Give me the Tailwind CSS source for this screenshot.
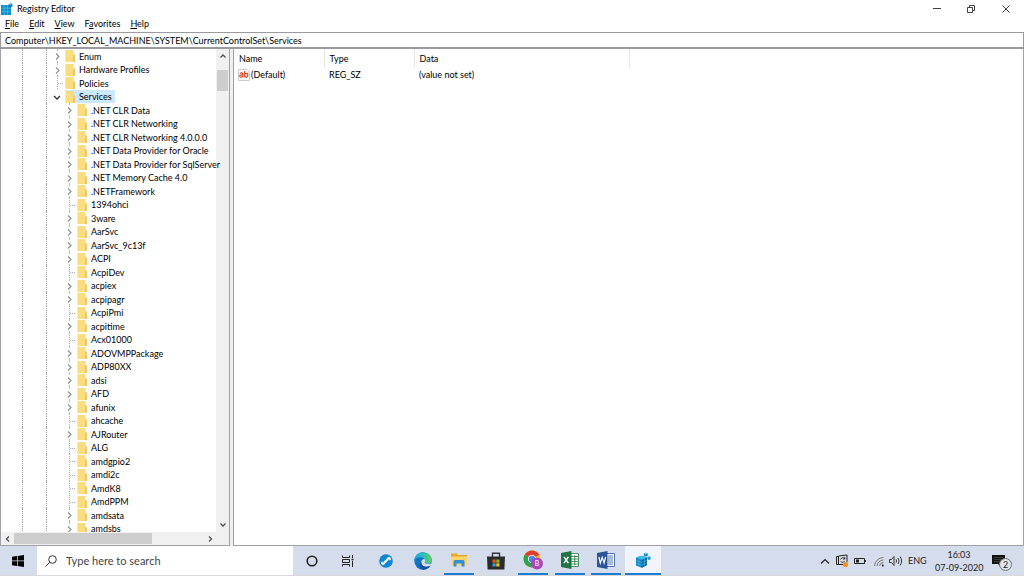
<!DOCTYPE html>
<html lang="en">
<head>
    <meta charset="UTF-8">
    <meta name="viewport" content="width=device-width, initial-scale=1.0">
    <title>Registry Editor</title>
    <script src="https://cdn.jsdelivr.net/npm/@tailwindcss/browser@4"></script>
</head>
<body class="h-screen flex flex-col overflow-hidden bg-white text-black font-['Lato','Noto_Sans',sans-serif] text-[9px] leading-[13px]">

    <!-- shared icons -->
    <svg class="hidden">
        <symbol id="folder" viewBox="0 0 10 12">
            <path d="M0 0h8.600v4l1.200 1v7H0z" fill="#fbdc7e"/>
            <path d="M0 0h1v12H0z" fill="#fee9a8"/>
            <path d="M8.400 4.600h1.500V12H8z" fill="#edc45a"/>
        </symbol>
        <symbol id="regedit" viewBox="0 0 16 16">
            <path d="M1 5.500l5.500-1.700L12 5.500v7.600l-5.200 2.700L1 13.400z" fill="#1284c4"/>
            <path d="M6.800 7.800L12 5.500v7.600l-5.200 2.700z" fill="#0a659f"/>
            <path d="M1 5.500l5.500-1.700L12 5.500 6.800 7.800z" fill="#41b9ec"/>
            <path d="M1 8.100l5.800 2.300L12 8M1 10.700l5.800 2.400 5.200-2.500M3.900 6.700v7.700M9.400 6.700v7.700" stroke="#5ec4ea" stroke-width=".5" fill="none"/>
            <path d="M8.800 1.600l2-.9 2 .9v2.200l-2 1-2-1zM12.400 4.900l1.600-.7 1.600.7v2.300l-1.600.8-1.600-.8z" fill="#1a8fcb"/>
            <path d="M8.800 1.600l2-.9 2 .9-2 .9zM12.400 4.900l1.600-.7 1.600.7-1.600.7z" fill="#63cdf3"/>
        </symbol>
    </svg>

    <!-- title bar -->
    <header class="flex items-center h-[17px] shrink-0 pl-px">
        <svg class="w-3 h-3" viewBox="0 0 12 12">
            <path d="M0 2h8v2h2v8H0z" fill="#118bcb"/>
            <path d="M0 5.200h10M0 8.600h10M3.300 2v10M6.600 2v10" stroke="#5cc8ef" stroke-width=".6"/>
            <path d="M7.500 1.500l2-1.200 2 .8v2.400l-2 1.200-2-.8z" fill="#1583bd"/>
            <path d="M7.500 1.500l2-1.200 2 .8-2 1z" fill="#56c4ee"/>
        </svg>
        <h1 class="ml-1 flex-1">Registry Editor</h1>
        <div class="flex text-neutral-700">
            <button class="w-[34px] h-4 grid place-items-center" aria-label="Minimize">
                <svg class="w-2 h-2" viewBox="0 0 8 8" stroke="currentColor"><path d="M0 3.500h8"/></svg>
            </button>
            <button class="w-[34px] h-4 grid place-items-center" aria-label="Restore">
                <svg class="w-2 h-2" viewBox="0 0 8 8" stroke="currentColor" fill="none"><path d="M.5 2.500h5v5h-5zM2.500 2V.5h5v5H6"/></svg>
            </button>
            <button class="w-[36px] h-4 grid place-items-center" aria-label="Close">
                <svg class="w-2 h-2" viewBox="0 0 8 8" stroke="currentColor"><path d="M.5.5l7 7M7.500.5l-7 7"/></svg>
            </button>
        </div>
    </header>

    <!-- menu -->
    <nav class="flex items-start h-[15px] shrink-0 gap-[10px] pl-[5px]">
        <button><u>F</u>ile</button>
        <button><u>E</u>dit</button>
        <button><u>V</u>iew</button>
        <button>F<u>a</u>vorites</button>
        <button><u>H</u>elp</button>
    </nav>

    <input type="text" aria-label="Address" value="Computer\HKEY_LOCAL_MACHINE\SYSTEM\CurrentControlSet\Services"
        class="h-[17px] w-full shrink-0 border border-b-2 border-[#9a9a9f] px-1 outline-none">

    <main class="flex-1 min-h-0 flex bg-[#f0f0f0]">
        <!-- key tree -->
        <section class="w-[230px] shrink-0 flex flex-col bg-white border-x border-b border-[#a0a0a8]">
            <div class="flex-1 min-h-0 flex">
                <ul id="tree" class="flex-1 min-w-0 z-10 overflow-y-clip"></ul>
                <div class="w-[13px] shrink-0 flex flex-col items-center bg-[#f0f0f0] text-neutral-600">
                    <button class="w-full h-[21px] flex justify-center pt-1" aria-label="Scroll up">
                        <svg class="w-1.5 h-1.5" viewBox="0 0 6 6" fill="none" stroke="currentColor" stroke-width="1.300"><path d="M.5 4.500L3 2 5.500 4.500"/></svg>
                    </button>
                    <div class="w-[11px] h-[21px] bg-[#cdcdcd]"></div>
                    <button class="mt-auto w-full h-3 flex justify-center pt-0.5" aria-label="Scroll down">
                        <svg class="w-1.5 h-1.5" viewBox="0 0 6 6" fill="none" stroke="currentColor" stroke-width="1.300"><path d="M.5 1.500L3 4 5.500 1.500"/></svg>
                    </button>
                </div>
            </div>
            <div class="h-[13px] shrink-0 flex bg-[#f0f0f0] pr-[13px] text-neutral-600">
                <button class="w-[13px] grid place-items-center" aria-label="Scroll left">
                    <svg class="w-1.5 h-1.5" viewBox="0 0 6 6" fill="none" stroke="currentColor" stroke-width="1.300"><path d="M4 .5L1.500 3 4 5.500"/></svg>
                </button>
                <div class="w-[138px] my-px bg-[#cdcdcd]"></div>
                <button class="ml-auto w-[13px] grid place-items-center" aria-label="Scroll right">
                    <svg class="w-1.5 h-1.5" viewBox="0 0 6 6" fill="none" stroke="currentColor" stroke-width="1.300"><path d="M2 .5L4.500 3 2 5.500"/></svg>
                </button>
            </div>
        </section>

        <!-- values -->
        <section class="ml-[3px] flex-1 bg-white border-x border-b border-[#a0a0a8]">
            <table class="table-fixed w-[396px] text-left">
                <thead>
                    <tr class="h-[19px]">
                        <th class="w-[90px] pl-[5px] font-normal border-r border-neutral-200">Name</th>
                        <th class="w-[90px] pl-[5px] font-normal border-r border-neutral-200">Type</th>
                        <th class="pl-[5px] font-normal border-r border-neutral-200">Data</th>
                    </tr>
                </thead>
                <tbody>
                    <tr class="h-[13px]">
                        <td class="pl-1">
                            <div class="flex items-center gap-px">
                                <svg class="w-3 h-3" viewBox="0 0 12 12">
                                    <path d="M.5.5h8.500l2.500 2.500v8.500H.5z" fill="#fafafa" stroke="#bdbdbd" stroke-width=".8"/>
                                    <g fill="none" stroke="#d9401f" stroke-width="1.200"><path d="M1.800 4.300c2.500-.9 3 0 3 1v3M4.800 6c-3-.2-3.300.5-3 1.500.6.9 2 .8 3-.2"/><path d="M6.700 2v6.300M6.700 5c1.500-1.400 3.200-.6 3.200 1.100 0 2-1.700 2.600-3.200 1.400"/></g>
                                </svg>
                                (Default)
                            </div>
                        </td>
                        <td class="pl-[5px]">REG_SZ</td>
                        <td class="pl-[5px]">(value not set)</td>
                    </tr>
                </tbody>
            </table>
        </section>
    </main>

    <!-- taskbar -->
    <footer class="h-[30px] shrink-0 flex bg-[#d5dcec] border-b border-[#d9d9dc]">
        <button class="w-[37px] grid place-items-center pr-px" aria-label="Start">
            <svg class="w-3 h-3" viewBox="0 0 12 12"><path d="M0 1.700L5 1v4.600H0zM5.700.9L12 0v5.600H5.700zM0 6.300h5V11l-5-.7zM5.700 6.300H12V12l-6.300-.9z"/></svg>
        </button>
        <label class="w-64 flex items-center bg-white pl-2">
            <svg class="w-3 h-3" viewBox="0 0 12 12" fill="none" stroke="#333"><circle cx="7.500" cy="4.500" r="3.800"/><path d="M4.800 7.200L.5 11.500"/></svg>
            <input type="text" placeholder="Type here to search" aria-label="Search"
                class="ml-[9px] w-[200px] text-[11px] outline-none placeholder:text-[#444]">
        </label>
        <button class="w-[37px] grid place-items-center" aria-label="Cortana">
            <svg class="w-3 h-3" viewBox="0 0 12 12"><circle cx="6" cy="6" r="4.800" fill="none" stroke="#222" stroke-width="1.600"/></svg>
        </button>
        <button class="w-[37px] grid place-items-center pr-px" aria-label="Task View">
            <svg class="w-[14px] h-3" viewBox="0 0 14 12" fill="none" stroke="#222"><path d="M1.500.5v2h7v-2M1.500 11.500v-2h7v2M1.500 4.500h7v3h-7zM11.500 0v3M11.500 6v6"/><path d="M10.500 4.500h2" stroke-width="1.600"/></svg>
        </button>
        <button class="w-[37px] grid place-items-center" aria-label="Support">
            <svg class="w-[14px] h-[14px]" viewBox="0 0 14 14"><circle cx="7" cy="7" r="6.800" fill="#0f86cf"/><path d="M5 9l4-4" stroke="#fff" stroke-width="2.200"/><path d="M5.900 8.100a2 2 0 1 1-2.900-.8l.9 1.500zM8.100 5.900a2 2 0 1 1 2.900.8l-.9-1.500z" fill="#fff"/></svg>
        </button>
        <button class="w-[37px] grid place-items-center" aria-label="Edge">
            <svg class="w-[18px] h-[18px]" viewBox="0 0 18 18">
                <defs>
                    <linearGradient id="wave" x1="0" x2="1"><stop offset="0" stop-color="#1ea5e0"/><stop offset=".6" stop-color="#35c1b8"/><stop offset="1" stop-color="#62cf4a"/></linearGradient>
                </defs>
                <circle cx="9" cy="9" r="8.700" fill="#1173c6"/>
                <path d="M.3 8.600C.8 3.600 4.500.3 9 .3c5.300 0 8.700 3.700 8.700 7.400 0 2.600-2 4-4.300 4-1.800 0-2.900-.6-2.900-1.100 0-.5.7-.7.7-1.900C11.200 7 9.500 5.200 6.600 5.200 3.400 5.200 1 7 .3 8.600z" fill="url(#wave)"/>
                <path d="M10.500 10.600c-.5 0 .7-.7.7-1.900 0-.7-.4-1.400-.9-1.900-2 .2-3 1.700-3 3.600 0 2.600 2.300 4.300 5.500 4.300 1.500 0 2.900-.5 3.700-1.100l.8-2.100c-1.500.6-6.300.6-6.800-.9z" fill="#d5dcec"/>
                <path d="M7.300 10.400c0 2.800 2.500 4.600 5.500 4.300 1.500 0 2.900-.5 3.700-1.100C15 16 12.400 17.700 9.500 17.700 5.500 17 4.500 12 7.300 10.400z" fill="#0f4f9e"/>
            </svg>
        </button>
        <button class="w-[37px] grid place-items-center pl-[3px] pr-1" aria-label="File Explorer">
            <span class="w-full h-full grid place-items-center border-b-2 border-[#1c7cd0]">
                <svg class="w-4 h-4" viewBox="0 0 16 16"><path d="M0 1.500h6l1 1.500h9v3H0z" fill="#e7a82b"/><path d="M0 4.500h16v9H0z" fill="#fcd668"/><path d="M2.500 14.500V9.500q0-1.500 1.500-1.500h8q1.500 0 1.500 1.500v5h-3v-3h-5v3z" fill="#348fd8"/></svg>
            </span>
        </button>
        <button class="w-[37px] grid place-items-center pr-px" aria-label="Microsoft Store">
            <svg class="w-[18px] h-[18px]" viewBox="0 0 18 18"><path d="M5.500 5V1.200h7V5" fill="none" stroke="#333" stroke-width="1.400"/><path d="M0 4.500h18l-.6 13H.6z" fill="#2b2b2d"/><path d="M5.500 7.500h3.200v3.200H5.500z" fill="#f0512b"/><path d="M9.300 7.500h3.200v3.200H9.300z" fill="#7fba22"/><path d="M5.500 11.300h3.200v3.200H5.500z" fill="#22a4ec"/><path d="M9.300 11.300h3.200v3.200H9.300z" fill="#fdb913"/></svg>
        </button>
        <button class="w-[37px] grid place-items-center pl-[3px] pr-1" aria-label="Chrome">
            <span class="w-full h-full grid place-items-center border-b-2 border-[#1c7cd0]">
                <svg class="w-5 h-5" viewBox="0 0 20 20">
                    <circle cx="9" cy="9" r="8.500" fill="#fbc116"/>
                    <path d="M9 9L1.640 4.750A8.500 8.500 0 0 1 16.360 4.750z" fill="#e23c2e"/>
                    <path d="M9 9L1.640 4.750A8.500 8.500 0 0 0 9 17.500L12 11z" fill="#2ba24c"/>
                    <path d="M9 5h7.500v-.5H9z" fill="#e23c2e"/>
                    <circle cx="9" cy="9" r="4" fill="#fff"/><circle cx="9" cy="9" r="3.200" fill="#4587f3"/>
                    <circle cx="14" cy="13.500" r="6" fill="#ab47bc"/>
                    <text x="14" y="16" text-anchor="middle" font-size="7" fill="#fff">B</text>
                </svg>
            </span>
        </button>
        <button class="w-9 grid place-items-center px-[3px]" aria-label="Excel">
            <span class="w-full h-full grid place-items-center border-b-2 border-[#1c7cd0]">
                <svg class="w-[18px] h-[18px]" viewBox="0 0 18 18"><path d="M9.500 2.500h8v13h-8z" fill="#fff" stroke="#1f7345" stroke-width=".8"/><path d="M10 5.500h7M10 8h7M10 10.500h7M10 13h7M13.800 4v10.500" stroke="#1f7345" stroke-width=".8"/><path d="M0 2L10.500 0v18L0 16z" fill="#1f7345"/><path d="M3 5.800l4.400 6.400M7.400 5.800L3 12.200" stroke="#fff" stroke-width="1.500"/></svg>
            </span>
        </button>
        <button class="w-[37px] grid place-items-center pl-[3px] pr-1" aria-label="Word">
            <span class="w-full h-full grid place-items-center border-b-2 border-[#1c7cd0]">
                <svg class="w-[18px] h-[18px]" viewBox="0 0 18 18"><path d="M9.500 2.500h8v13h-8z" fill="#fff" stroke="#2a5699" stroke-width=".8"/><path d="M11 5h5M11 7h5M11 9h5M11 11h5M11 13h5" stroke="#2a5699" stroke-width=".8"/><path d="M0 2L10.500 0v18L0 16z" fill="#2a5699"/><path d="M1.900 6l1.400 6 1.900-5.600L7.100 12l1.500-6" stroke="#fff" stroke-width="1.200" fill="none"/></svg>
            </span>
        </button>
        <button class="w-9 grid place-items-center bg-[#f1f4fa] border-b-2 border-[#1c7cd0]" aria-label="Registry Editor">
            <svg class="w-4 h-4"><use href="#regedit"/></svg>
        </button>

        <!-- tray -->
        <div class="ml-auto flex items-center gap-[5px] text-[#222]">
            <button aria-label="Hidden icons"><svg class="w-[10px] h-3" viewBox="0 0 10 12" fill="none" stroke="currentColor" stroke-width="1.200"><path d="M1 8.500l4-4 4 4"/></svg></button>
            <svg class="w-[14px] h-[14px]" viewBox="0 0 14 14" fill="none" stroke="currentColor"><path d="M3.500 2.500h-2v8H8M3.500 2v8.500M3.500 2l8.500-1v7"/><path d="M5.500 5.500A2.400 2.400 0 0 1 9.500 4.500M9.800 3v2H8M9.500 7.200a2.400 2.400 0 0 1-3.800.3" stroke-width=".9"/><circle cx="10.500" cy="10.500" r="2.600" fill="#f7901e" stroke="none"/></svg>
            <svg class="w-3 h-3" viewBox="0 0 12 12"><path d="M.5 3.500h10v5H.5z" fill="none" stroke="currentColor"/><path d="M2 4.500h3v3H2zM11 5h1v2h-1z" fill="currentColor"/></svg>
            <svg class="ml-[3px] w-[10px] h-3" viewBox="0 0 10 12" fill="none" stroke="#777"><path d="M.5 11A9 9 0 0 1 9.500 2.500M3 11a6.500 6.500 0 0 1 6.500-6M5.500 11a4 4 0 0 1 4-3.500"/><circle cx="8.800" cy="10.500" r="1" fill="#222" stroke="none"/></svg>
            <svg class="w-[14px] h-3" viewBox="0 0 14 12" fill="none" stroke="currentColor" stroke-width=".9"><path d="M.5 4.500h2l2.500-3v9l-2.500-3h-2zM7 4.300q1.200 1.700 0 3.400M9 3q2.200 3 0 6M11 1.500q3.300 4.500 0 9"/></svg>
            <span class="w-[18px]">ENG</span>
            <time class="ml-1 w-12 text-center whitespace-nowrap">16:03<br>07-09-2020</time>
            <button class="ml-1 mr-[14px] relative w-[18px] h-[18px]" aria-label="Notifications">
                <svg class="w-[14px] h-[14px]" viewBox="0 0 14 14"><path d="M0 1h13v9H9v3l-3-3H0z" fill="#111"/><path d="M2 3.500h9M2 5.500h9M2 7.500h9" stroke="#666" stroke-width=".5"/></svg>
                <span class="absolute left-[7px] top-[6px] w-[13px] h-[13px] rounded-full border border-neutral-500 bg-[#dfe3ec] leading-[11px] text-center">2</span>
            </button>
        </div>
    </footer>

    <script>
        // + closed key with children, v open key, - key without children
        const parents = ['+Enum', '+Hardware Profiles', '-Policies', 'vServices'];
        const services = [
            '+.NET CLR Data', '+.NET CLR Networking', '+.NET CLR Networking 4.0.0.0',
            '+.NET Data Provider for Oracle', '+.NET Data Provider for SqlServer',
            '+.NET Memory Cache 4.0', '+.NETFramework', '-1394ohci', '+3ware', '+AarSvc',
            '+AarSvc_9c13f', '+ACPI', '-AcpiDev', '+acpiex', '+acpipagr', '-AcpiPmi',
            '+acpitime', '-Acx01000', '+ADOVMPPackage', '+ADP80XX', '+adsi', '+AFD',
            '+afunix', '-ahcache', '+AJRouter', '-ALG', '-amdgpio2', '-amdi2c', '-AmdK8',
            '-AmdPPM', '+amdsata', '+amdsbs'
        ];

        const expanders = {
            '+': '<path d="M8.500 0v2M8.500 12v2" stroke="#bbb"/><path d="M7 4.500l3 3-3 3" stroke="#8c8c8c" stroke-width="1.100"/>',
            'v': '<path d="M5 6l3 3 3-3" stroke="#333" stroke-width="1.400"/>',
            '-': '<path d="M8.500 0v14M9 7.500h5" stroke="#aaa" stroke-dasharray="1 1"/>'
        };

        function row(key, indent) {
            const open = key[0] === 'v';
            return `<li class="flex h-[13px] odd:h-[14px] whitespace-nowrap">
                <span class="w-[22px] shrink-0 border-r border-dotted border-neutral-400"></span>
                <span class="w-6 shrink-0 border-r border-dotted border-neutral-400"></span>
                <svg class="${indent} w-4 h-[14px] shrink-0" viewBox="0 0 16 14" fill="none">${expanders[key[0]]}</svg>
                <span class="flex items-center ${open ? 'bg-[#cce8ff] pr-[3px]' : ''}">
                    <svg class="w-[10px] h-3 shrink-0 mr-1"><use href="#folder"/></svg>${key.slice(1)}
                </span>
            </li>`;
        }

        document.getElementById('tree').innerHTML =
            parents.map(k => row(k, 'ml-[2px]')).join('') +
            services.map(k => row(k, 'ml-[14px]')).join('');
    </script>

</body>
</html>
